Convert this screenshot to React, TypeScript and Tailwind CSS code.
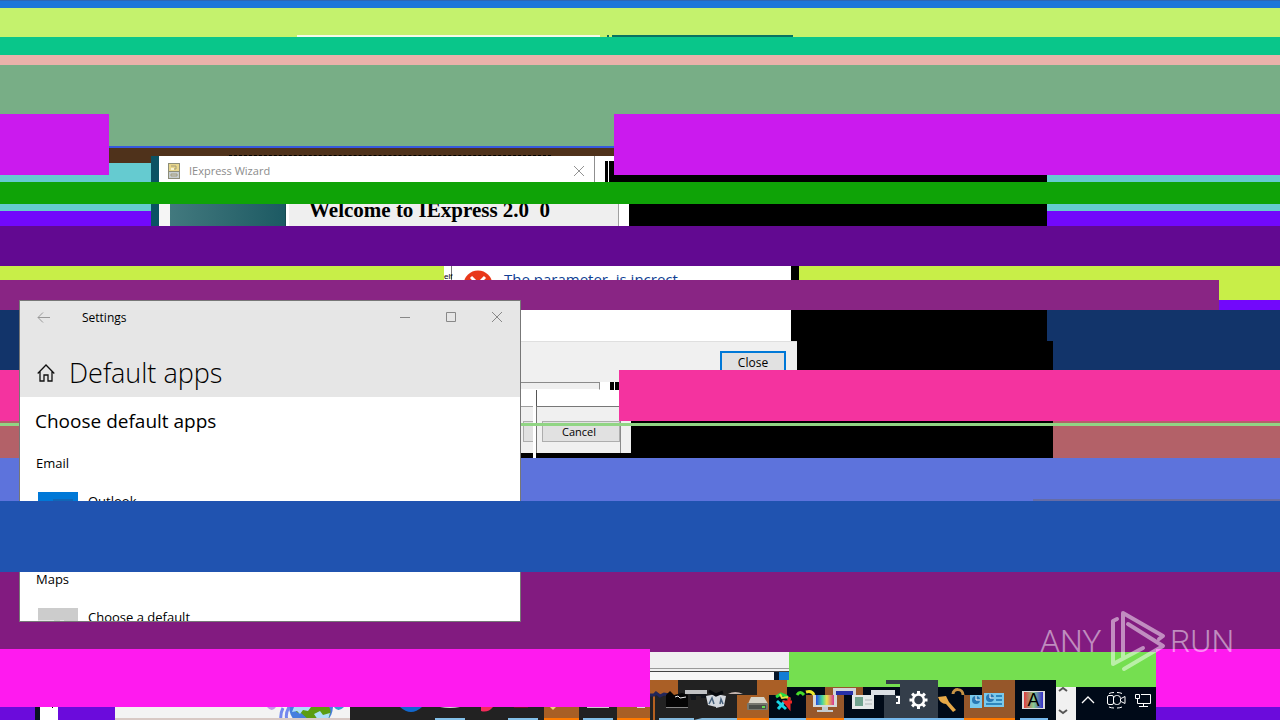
import React from 'react';

function WizardWindow() {
  return (
    <section className="absolute left-[151px] top-[156px] z-10 flex w-[478px] flex-col bg-white font-['Open_Sans',sans-serif]">
      <header className="flex h-[26px]">
        <div className="w-2 bg-[#0b5263]" />
        <div className="flex w-[436px] items-center border-r border-[#8f8f8f] bg-white pl-2 pt-1">
          <svg width="14" height="16" viewBox="0 0 14 16" className="mr-2">
            <rect x="1" y="0" width="12" height="16" fill="#8d8d78" />
            <rect x="2" y="1" width="10" height="7" fill="#e8d68b" />
            <rect x="2" y="9" width="10" height="6" fill="#c7cdd0" />
            <path d="M4 3h5v3H7M4 11h6v2H4z" stroke="#a39c7c" fill="none" />
            <rect x="4" y="5" width="3" height="2" fill="#f8f3d0" />
          </svg>
          <h2 className="flex-1 text-[11px] leading-4 text-[#8c8c8c]">IExpress Wizard</h2>
          <button aria-label="Close wizard" className="mr-2.5">
            <svg width="10" height="10" viewBox="0 0 10 10" stroke="#929292">
              <path d="M0 0l10 10M10 0L0 10" />
            </svg>
          </button>
        </div>
        <div className="w-[10px] bg-white" />
        <div className="w-[3px] border-t-[5px] border-white bg-black" />
        <div className="w-px bg-white" />
        <div className="flex-1 border-t-[5px] border-white bg-black" />
      </header>
      <div className="h-[22px]" />
      <div className="flex h-[22px]">
        <div className="w-2 bg-[#0b5263]" />
        <div className="w-[11px] bg-[#f5f5f5]" />
        <div className="w-[116px] border-r border-[#174a50] bg-linear-to-r from-[#42797e] to-[#1c5a63]" />
        <div className="w-[3px] bg-white" />
        <div className="w-[330px] overflow-hidden border-r border-[#a0a0a0] bg-[#efefef] pl-5">
          <p className="-mt-2 whitespace-pre font-['Liberation_Serif',serif] text-[21px] leading-7 font-bold text-black">Welcome to IExpress 2.0  0</p>
        </div>
        <div className="flex-1 bg-white" />
      </div>
    </section>
  );
}

function ErrorDialog() {
  return (
    <section className="absolute left-[444px] top-[266px] z-10 w-[353px] font-['Open_Sans',sans-serif]">
      <div className="flex h-[75px] w-[347px] bg-white">
        <div className="w-2 border-r border-[#777] font-['Liberation_Sans',sans-serif] text-[8px] leading-[22px] text-black">elf</div>
        <svg width="30" height="30" viewBox="0 0 30 30" className="ml-[11px] mt-1">
          <circle cx="15" cy="15" r="14.500" fill="#e8381b" />
          <path d="M8 7l14 14M22 7L8 21" stroke="#fff" strokeWidth="3" />
        </svg>
        <p className="ml-[11px] whitespace-pre pt-[3px] text-[15px] leading-5 text-[#113f93]">The parameter  is increct</p>
      </div>
      <div className="flex h-[41px] justify-end border-t border-[#dfdfdf] bg-[#f0f0f0] pr-[11px] pt-[9px]">
        <button className="h-[23px] w-[66px] border-2 border-[#0078d7] bg-[#e1e1e1] text-[12px] leading-4 text-black">Close</button>
      </div>
      <div className="ml-[76px] flex h-2 bg-[#f0f0f0]">
        <div className="w-[80px] border-y border-r border-[#8b8b8b] border-b-white bg-[#efefef]" />
        <div className="w-[10px] bg-white" />
        <div className="w-1 bg-black" />
        <div className="w-px bg-white" />
        <div className="flex-1 bg-black" />
      </div>
    </section>
  );
}

function CancelWindow() {
  return (
    <section className="absolute left-[520px] top-[390px] z-10 flex w-[111px] font-['Open_Sans',sans-serif]">
      <div className="w-[13px]">
        <div className="h-4 bg-white" />
        <div className="h-[47px] border-t border-[#a0a0a0] bg-[#f0f0f0] pl-[3px] pt-[14px]">
          <div className="h-[21px] border border-r-0 border-[#adadad] bg-[#e1e1e1]" />
        </div>
        <div className="h-[5px] bg-black" />
      </div>
      <div className="w-[3px] bg-white" />
      <div className="flex-1">
        <div className="h-4 border-l border-[#555] bg-white" />
        <div className="flex h-[47px] border-l border-t border-[#777] bg-[#f0f0f0] pl-[5px]">
          <div className="w-[79px] border-r border-[#8a8a8a] pt-[14px]">
            <button className="block h-[21px] w-full border border-[#adadad] bg-[#e1e1e1] pr-1 text-[11px] leading-[19px] text-black">Cancel</button>
          </div>
        </div>
        <div className="h-[5px] bg-black" />
      </div>
    </section>
  );
}

function SettingsWindow() {
  return (
    <main className="absolute left-[19px] top-[300px] z-30 h-[322px] w-[502px] overflow-hidden border border-[#777] bg-white font-['Open_Sans',sans-serif] text-black">
      <header className="h-24 bg-[#e6e6e6]">
        <div className="flex h-8 items-center">
          <button aria-label="Back" className="ml-[17px]">
            <svg width="13" height="11" viewBox="0 0 13 11" fill="none" stroke="#999">
              <path d="M6 .5l-5 5 5 5M1 5.500h12" />
            </svg>
          </button>
          <span className="ml-8 flex-1 pt-0.5 text-[12px] leading-4">Settings</span>
          <div className="flex gap-9 pr-[18px]">
            <button aria-label="Minimize">
              <svg width="10" height="10" viewBox="0 0 10 10" stroke="#888"><path d="M0 5.500h10" /></svg>
            </button>
            <button aria-label="Maximize">
              <svg width="10" height="10" viewBox="0 0 10 10" fill="none" stroke="#888"><path d="M.5.5h9v9h-9z" /></svg>
            </button>
            <button aria-label="Close settings">
              <svg width="10" height="10" viewBox="0 0 10 10" stroke="#888"><path d="M0 0l10 10M10 0L0 10" /></svg>
            </button>
          </div>
        </div>
        <div className="flex items-center pl-[17px] pt-[22px]">
          <svg width="18" height="18" viewBox="0 0 18 18" fill="none" stroke="#111" strokeWidth="1.300">
            <path d="M.7 9.500L9 1l8.300 8.500M3 7.500V17h4v-6h4v6h4V7.500" />
          </svg>
          <h1 className="ml-3.5 text-[27px] leading-9 font-light">Default apps</h1>
        </div>
      </header>
      <div className="px-[15px]">
        <h2 className="pt-2.5 text-[19px] leading-7">Choose default apps</h2>
        <h3 className="mt-[18px] pl-px text-[13px] leading-5">Email</h3>
        <div className="mt-[19px] flex h-10 gap-2.5 pl-[3px]">
          <svg width="40" height="40" viewBox="0 0 40 40">
            <rect width="40" height="40" fill="#0078d7" />
            <path d="M15 7h20v25H15z" fill="#1066b7" />
          </svg>
          <span className="text-[13px] leading-[18px]">Outlook</span>
        </div>
        <h3 className="mt-[37px] pl-px text-[13px] leading-5">Maps</h3>
        <div className="mt-[19px] flex h-10 gap-2.5 pl-[3px]">
          <svg width="40" height="40" viewBox="0 0 40 40">
            <rect width="40" height="40" fill="#ccc" />
            <path d="M0 12h16v1H0zM22 12h4v1h-4z" fill="#e4e4e4" />
          </svg>
          <span className="text-[13px] leading-[18px]">Choose a default</span>
        </div>
      </div>
    </main>
  );
}

function TaskIcons() {
  return (
    <svg className="pointer-events-none absolute left-0 top-0" width="506" height="40" viewBox="650 680 506 40">
      <path d="M650 695h4l2-2 4 3 4-2 6 1" stroke="#20265a" strokeWidth="3" fill="none" />
      <path d="M666 695l4-4 4 4 8-2 6 2v13h-22z" fill="#050505" />
      <path d="M675 697l3-1 2 2 6-1" stroke="#eee" fill="none" />
      <path d="M666 707.500h22" stroke="#888" />
      <rect x="685" y="690" width="22" height="4" fill="#bfc1c3" />
      <path d="M690 694h16v4h-5v-2h-5v4h-5z" fill="#10141a" />
      <path d="M706 696l10-2v13l-8-2zM716 694l10 2-2 10-8 2z" fill="#d4d9df" />
      <path d="M709 704l3-6 2 6M720 704l1-5 2 5" stroke="#47617b" fill="none" strokeWidth="1.500" />
      <path d="M709 691l7 4 7-3" stroke="#06090d" strokeWidth="3" fill="none" />
      <path d="M728 694q7-4 15 0z" fill="#c5b5af" />
      <path d="M751 697h13l4 7h-20z" fill="#d6d3c7" />
      <rect x="747" y="703" width="21" height="7" rx="1" fill="#77776e" />
      <rect x="749" y="705" width="17" height="4" fill="#4b4e49" />
      <path d="M762 707h3" stroke="#61df52" strokeWidth="2" />
      <path d="M777 701l9 8M778 709l7-8" stroke="#19d5e7" strokeWidth="3" />
      <path d="M776 697l5-3 5 2 4 4" stroke="#25df43" strokeWidth="3" fill="none" />
      <path d="M789 697v10l-4-5h7" stroke="#eb2725" strokeWidth="3" fill="none" />
      <path d="M780 694l2 4 6-1" stroke="#e5e53a" strokeWidth="2" fill="none" />
      <path d="M797 695q3-5 7 0" stroke="#48dd29" strokeWidth="3" fill="none" />
      <path d="M806 692q6-2 8 3" stroke="#ebe72b" strokeWidth="3" fill="none" />
      <rect x="833" y="688" width="23" height="7" fill="#d3d4d9" />
      <rect x="836" y="691" width="17" height="4" fill="#2730a8" />
      <defs>
        <linearGradient id="screen"><stop stopColor="#234be3" /><stop offset=".35" stopColor="#46d6a0" /><stop offset=".6" stopColor="#eae34c" /><stop offset="1" stopColor="#d53391" /></linearGradient>
        <linearGradient id="letter"><stop stopColor="#e13c40" /><stop offset=".5" stopColor="#88cc8e" /><stop offset="1" stopColor="#342dcc" /></linearGradient>
      </defs>
      <path d="M813 695h24v12h-24z" fill="#d6d8d9" />
      <path d="M816 695h18v10h-18z" fill="url(#screen)" />
      <path d="M822 707h6v3h5v2h-16v-2h5z" fill="#c4cbd0" />
      <rect x="871" y="690" width="24" height="5" fill="#dce0e4" />
      <rect x="852" y="695" width="22" height="14" fill="#e5e8e8" />
      <rect x="855" y="697" width="8" height="9" fill="#70a28e" />
      <path d="M865 700h7M865 704h7" stroke="#afb5b7" />
      <path d="M896 696h4v8h-4v-2h2v-4h-2z" fill="#fff" />
      <g transform="translate(918.500 700)" stroke="#fff" fill="none">
        <circle r="5.500" strokeWidth="2.500" />
        <path d="M0-9v3M0 6v3M-9 0h3M6 0h3M-6.400-6.400l2 2M4.400 4.400l2 2M6.400-6.400l-2 2M-4.400 4.400l-2 2" strokeWidth="3" />
      </g>
      <path d="M938 697l8-1 3 6 7 8-3 2-7-8q-6 0-8-7z" fill="#e7a948" />
      <path d="M953 694c0-6 10-6 10 1" stroke="#c69346" strokeWidth="3" fill="none" />
      <path d="M970 695h12v13h-12zM984 693h20v14h-20z" fill="#79c9ed" />
      <circle cx="976" cy="700" r="4" fill="#2878b4" /><circle cx="990" cy="698" r="4" fill="#2878b4" />
      <path d="M976 696v4h4M990 694v4h4" stroke="#fff" fill="none" />
      <path d="M996 696h6M996 700h6M986 704h16" stroke="#2e87be" strokeWidth="2" />
      <rect x="1022" y="691" width="23" height="18" fill="#ddd" />
      <rect x="1024" y="692" width="19" height="16" fill="url(#letter)" />
      <path d="M1059 691l4-3 4 3M1059 710l4 3 4-3" stroke="#555" strokeWidth="2" fill="none" />
      <g stroke="#fff" fill="none">
        <path d="M1082 703l6-6 6 6" strokeWidth="1.300" />
        <rect x="1107.500" y="695.500" width="6" height="9" rx="1.500" />
        <rect x="1113.500" y="695.500" width="7" height="9" rx="3" />
        <path d="M1121 698.500l4-2v7l-4-2M1109 693.500q2-1 5-1M1117 692.500q3 0 5 1M1109 707q2 1 5 1M1117 708q3 0 5-1" />
        <path d="M1141 694.500h9.500v9h-13v-5M1143.500 703v3M1139 706.500h9M1135.500 694.500h4v4h-4zM1137.500 698.500v4" />
      </g>
    </svg>
  );
}

function Taskbar() {
  return (
    <nav className="relative h-10 bg-[#000a18]">
      <div className="flex h-[15px]">
        <div className="w-7 bg-[#aa5f26]" />
        <div className="w-[79px] bg-[#222]" />
        <div className="w-[30px] bg-[#aa5f26]" />
        <div className="w-[38px] border-t-[7px] border-[#75df50]" />
        <div className="w-[38px] border-t-[7px] border-[#75df50] bg-[#96572a]" />
        <div className="w-[23px] border-t-[7px] border-[#75df50]" />
        <div className="w-[14px]"><div className="h-1 bg-[#343c47]" /><div className="h-[3px] bg-[#75df50]" /></div>
        <div className="w-[38px] bg-[#343e4a]" />
        <div className="w-11 border-t-[7px] border-[#75df50]" />
        <div className="w-[33px] bg-[#96572a]" />
        <div className="w-[41px]" />
        <div className="w-5 border-t-[7px] border-[#75df50] bg-[#f1f1f1]" />
        <div className="w-20 border-t-[7px] border-[#75df50]" />
      </div>
      <div className="flex h-[25px]">
        <div className="w-[5px] border-r-2 border-[#b56020] bg-[#222]" />
        <div className="w-1 bg-[#222]" />
        <button aria-label="Command prompt" className="w-[35px] border-b-2 border-[#84b9dd] bg-[#222]" />
        <button aria-label="Editor" className="w-[43px] border-b-2 border-l-[8px] border-[#84b9dd] border-l-[#222] bg-[#222]" />
        <button aria-label="Storage" className="w-8 border-b-2 border-[#ff7a00] bg-[#a85f25]" />
        <button aria-label="Tools" className="w-[37px] border-b-2 border-[#76b9ed]" />
        <button aria-label="Display" className="w-[38px] border-b-2 border-[#ff7a00] bg-[#96572a]" />
        <button aria-label="Programs" className="w-10 border-b-2 border-[#76b9ed]" />
        <button aria-label="Settings" className="w-[54px] border-b-2 border-[#76b9ed] bg-[#343e4a]" />
        <button aria-label="Keys" className="w-[26px] border-b-2 border-[#76b9ed]" />
        <button aria-label="Control panel" className="w-[51px] border-b-2 border-[#ff7a00] bg-[#96572a]" />
        <button aria-label="Fonts" className="mr-2 ml-[5px] w-7 border-b-2 border-[#76b9ed]" />
        <div className="w-5 bg-[#f1f1f1]" />
      </div>
      <TaskIcons />
      <span className="absolute left-[376px] top-[10px] w-[15px] text-center font-['Liberation_Sans',sans-serif] text-[18px] leading-5 text-black">A</span>
    </nav>
  );
}

function LeftStrip() {
  return (
    <div className="flex h-[13px] bg-[#222]">
      <div className="w-[35px] bg-[#6b0bdc]" />
      <div className="w-[5px] bg-[#091321]" />
      <div className="w-[18px] bg-white pl-3"><div className="h-px w-px bg-black" /></div>
      <div className="w-[57px] bg-[#6b0bdc]" />
      <div className="flex w-[235px] justify-end border-b-2 border-[#d8c9c5] bg-[#f3f3f3]">
        <svg width="90" height="11" viewBox="260 707 90 11">
          <path d="M267 707q5 6 9 0" fill="#c594e9" />
          <circle cx="311" cy="706" r="22" fill="#467ede" />
          <path d="M294 707h35q4 5-2 13h-18l-8-7q-5 1-7-6z" fill="#5b9d12" />
          <path d="M294 707h17l-3 4-5-1-3 4-3-3-5 1zM314 714l6-3 3 4 7-2-2 7h-10z" fill="#addffa" />
          <path d="M289 707q-4 7-2 13M283 708q-3 6-2 12" stroke="#7488ed" strokeWidth="3" fill="none" />
          <path d="M334 707q4 6 10 0" fill="#34a0cf" />
        </svg>
      </div>
      <svg width="194" height="13" viewBox="350 707 194 13">
        <path d="M400 707q11 10 22 0" fill="#1268ce" />
        <path d="M440 707q10 2 20 0z" fill="#ddd" />
        <path d="M481 707h12q-5 6-12 4z" fill="#f52b5b" />
        <path d="M514 707h14v1h-14z" fill="#691322" />
        <path d="M435 718h30v2h-30zM508 718h30v2h-30z" fill="#83c0e8" />
      </svg>
      <div className="w-[35px] border-b-2 border-[#ff7a00] bg-[#a85f25]">
        <svg width="20" height="5" viewBox="0 0 20 5"><path d="M6 0h6l-3 3z" fill="#f0d477" /></svg>
      </div>
      <div className="mx-1 w-[30px] border-b-2 border-[#83c0e8]"><div className="mx-1 h-px bg-[#ccc]" /></div>
      <div className="flex-1 border-b-2 border-[#ff7a00] bg-[#a85f25]"><div className="ml-5 h-px w-2 bg-[#ddd]" /></div>
    </div>
  );
}

export default function App() {
  return (
    <div className="relative flex min-h-screen w-full flex-col overflow-hidden bg-black">
      <div className="h-2 border-t border-[#2c66b5] bg-[#1c76d9]" />
      <div className="flex h-[29px] items-end bg-[#c4f26d]">
        <div className="ml-[297px] h-0.5 w-[303px] bg-[#f5fae9]" />
        <div className="ml-[7px] h-0.5 w-0.5 bg-[#116b58]" />
        <div className="ml-[3px] h-0.5 w-[181px] bg-[#087461]" />
      </div>
      <div className="h-[18px] bg-[#09c68a]" />
      <div className="h-2.5 bg-[#eab2aa]" />
      <div className="h-[49px] bg-[#78ae86]" />
      <div className="flex h-[61px]">
        <div className="w-[109px] bg-[#cb1aee]" />
        <div className="w-[505px] bg-[#65cbd0]">
          <div className="h-8 bg-[#78ae86]" />
          <div className="h-0.5 bg-[#3659dd]" />
          <div className="flex h-[15px] bg-[#4f321b]">
            <div className="ml-[120px] h-2 w-[322px] border-b border-dashed border-black" />
          </div>
        </div>
        <div className="relative z-20 flex-1 bg-[#cb1aee]" />
      </div>
      <div className="flex h-[7px] bg-[#65cbd0]"><div className="ml-[610px] w-[437px] bg-black" /></div>
      <div className="relative z-20 h-[22px] bg-[#0fa307]" />
      <div className="flex h-[22px] flex-col">
        <div className="flex h-[7px] bg-[#65cbd0]"><div className="ml-[610px] w-[437px] bg-black" /></div>
        <div className="flex h-[15px] bg-[#7208fb]"><div className="ml-[610px] w-[437px] bg-black" /></div>
      </div>
      <div className="relative z-20 h-10 bg-[#620991]" />
      <div className="flex h-3.5 bg-[#c8ee48]"><div className="ml-[791px] w-2 bg-black" /></div>
      <div className="relative z-20 flex h-[30px]">
        <div className="w-[1219px] bg-[#892584]" />
        <div className="flex-1 border-b-[10px] border-[#7208fb] bg-[#c8ee48]" />
      </div>
      <div className="flex h-[31px] bg-[#12346a]"><div className="ml-5 w-[1027px] bg-black" /></div>
      <div className="flex h-[29px] bg-[#12346a]"><div className="ml-5 w-[1033px] bg-black" /></div>
      <div className="flex h-[51px]">
        <div className="w-5 bg-[#f4339f]" />
        <div className="w-[599px] bg-white" />
        <div className="relative z-20 flex-1 bg-[#f4339f]" />
      </div>
      <div className="flex h-[37px] bg-[#b36168]">
        <div className="w-[1053px] bg-black"><div className="h-full w-5 bg-[#b36168]" /></div>
      </div>
      <div className="relative z-20 -mt-[35px] mb-8 h-[3px] bg-[#91d584]" />
      <div className="flex h-[43px] items-end bg-[#5d73dc]">
        <div className="ml-[1033px] h-0.5 flex-1 bg-[#656ca6]" />
      </div>
      <div className="relative z-40 h-[71px] bg-[#2053b0]" />
      <div className="h-[77px] bg-[#821b80]" />
      <div className="flex h-[71px]">
        <div className="w-[650px]">
          <div className="h-[58px] bg-[#ff1aef]" />
          <LeftStrip />
        </div>
        <div className="w-[506px] bg-[#821b80] pt-[3px]">
          <div className="flex h-7 bg-[#75df50]">
            <div className="w-[139px] bg-[#f0f0f0] pt-4">
              <div className="h-1 border-y border-[#999] bg-[#efefef] border-b-[#444]" />
              <div className="flex h-2 bg-[#f7f7f7]">
                <div className="ml-[124px] w-[5px] bg-[#061527]" />
                <div className="w-2.5 bg-[#127dd5]" />
              </div>
            </div>
          </div>
          <Taskbar />
        </div>
        <div className="flex-1 border-b-[13px] border-[#6b0bdc] bg-[#ff1aef]" />
      </div>

      <WizardWindow />
      <ErrorDialog />
      <CancelWindow />
      <SettingsWindow />

      <div className="absolute left-[1040px] top-[610px] z-50 flex h-[62px] items-center font-['Liberation_Sans_Narrow',Roboto,sans-serif] text-[32px] leading-[62px] font-light text-white/50">
        <span className="w-[70px]">ANY</span>
        <svg width="56" height="62" viewBox="0 0 56 62" fill="none" stroke="#fff" strokeOpacity=".5" strokeLinejoin="round" strokeLinecap="round">
          <path d="M7 9L3 11V54L33 38M13 47V3L53 26L49 29M18 14L53 36L14 59" strokeWidth="4" />
        </svg>
        <span className="pl-1">RUN</span>
      </div>
    </div>
  );
}
